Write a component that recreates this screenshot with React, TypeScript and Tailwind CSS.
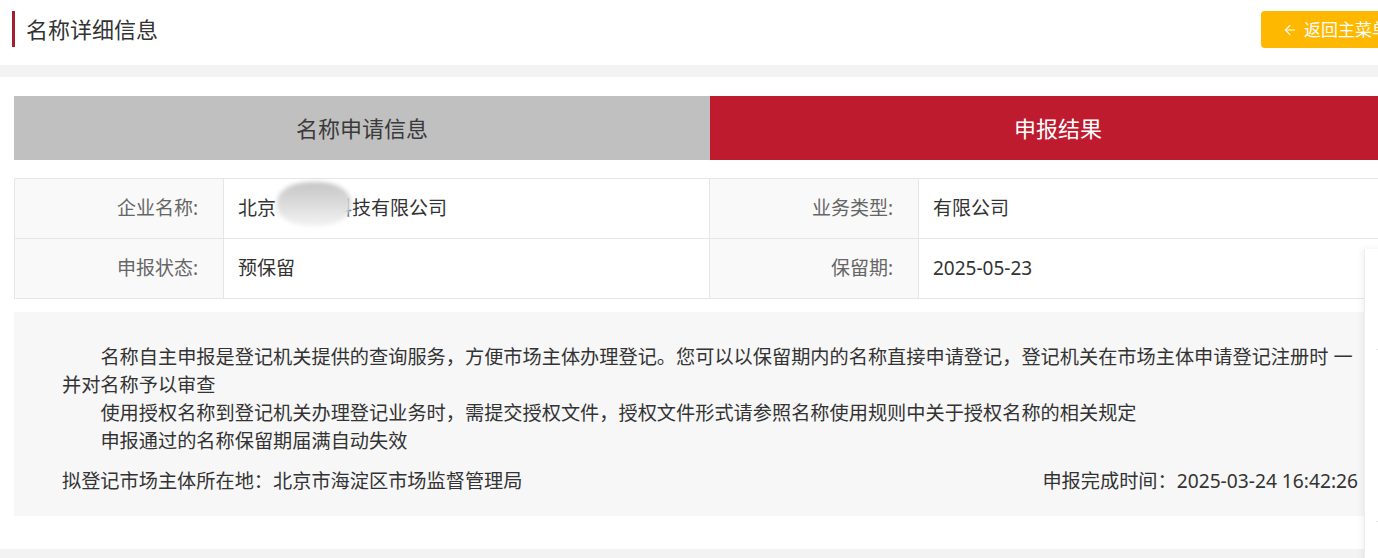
import { ArrowLeft } from "lucide-react";

type Field = {
  label: string;
  value: React.ReactNode;
};

const rows: Field[][] = [
  [
    {
      label: "企业名称:",
      value: (
        <span className="relative">
          北京<span className="text-transparent">某某某</span>科技有限公司
          <span className="absolute left-[39px] top-[-12px] h-[44px] w-[74px] rounded-[45%] bg-gradient-to-b from-[#c6c6c6] via-[#dcdcdc] to-[#f3f3f3] blur-[2px]" />
        </span>
      ),
    },
    { label: "业务类型:", value: "有限公司" },
  ],
  [
    { label: "申报状态:", value: "预保留" },
    { label: "保留期:", value: "2025-05-23" },
  ],
];

const notes = [
  "名称自主申报是登记机关提供的查询服务，方便市场主体办理登记。您可以以保留期内的名称直接申请登记，登记机关在市场主体申请登记注册时 一并对名称予以审查",
  "使用授权名称到登记机关办理登记业务时，需提交授权文件，授权文件形式请参照名称使用规则中关于授权名称的相关规定",
  "申报通过的名称保留期届满自动失效",
];

export default function App() {
  return (
    <div className="relative h-[558px] w-[1378px] overflow-hidden bg-white font-['Noto_Sans','Noto_Sans_CJK_SC',sans-serif] text-[#333]">
      <div className="w-[1420px]">
        {/* header */}
        <header className="flex h-[65px] items-start justify-between pl-3 pr-[10px] pt-[11px]">
          <div className="flex h-[36px] items-center border-l-[3px] border-[#a31f2f] pl-[11px] text-[22px] leading-none text-[#333]">
            名称详细信息
          </div>
          <button className="flex h-[37px] w-[149px] items-center gap-[6px] rounded-[4px] bg-[#ffb800] pl-[21px] text-[17px] leading-none text-white">
            <ArrowLeft className="h-[16px] w-[16px]" strokeWidth={1.6} />
            返回主菜单
          </button>
        </header>
        <div className="h-3 bg-[#f3f3f3]" />

        <main className="px-[14px] pt-[19px]">
          {/* tabs */}
          <div className="grid h-16 grid-cols-2 text-[22px]">
            <div className="flex items-center justify-center bg-[#c0c0c0] text-[#3a3a3a]">名称申请信息</div>
            <div className="flex items-center justify-center bg-[#bf1b2f] text-white">申报结果</div>
          </div>

          {/* details table */}
          <div className="mt-[18px] border-t border-l border-[#e6e6e6] text-[19px]">
            {rows.map((row, i) => (
              <div key={i} className="grid h-[60px] grid-cols-[209px_486px_209px_1fr] border-b border-[#e6e6e6]">
                {row.map((f) => (
                  <div key={f.label} className="contents">
                    <div className="flex items-center justify-end border-r border-[#e6e6e6] bg-[#f9f9f9] pr-[25px] text-[#666]">
                      {f.label}
                    </div>
                    <div className="flex items-center border-r border-[#e6e6e6] pl-[14px] text-[#333]">{f.value}</div>
                  </div>
                ))}
              </div>
            ))}
          </div>

          {/* notes */}
          <div className="mt-[13px] bg-[#f7f7f7] pb-[21px] pl-12 pr-12 pt-[31px] text-[19.2px] leading-[28px] text-[#333]">
            {notes.map((n) => (
              <p key={n} className="indent-[2em]">
                {n}
              </p>
            ))}
            <div className="mt-3 flex justify-between">
              <span>拟登记市场主体所在地：北京市海淀区市场监督管理局</span>
              <span>申报完成时间：2025-03-24 16:42:26</span>
            </div>
          </div>
        </main>

        <div className="mt-[33px] h-[10px] bg-[#f3f3f3]" />
      </div>

      {/* floating side panel, cut off by the window edge */}
      <div className="absolute left-[1364px] top-[249px] h-[320px] w-[60px] border-l border-[#eeeeee] bg-white shadow-[-2px_0_6px_rgba(0,0,0,0.06)]">
        <div className="ml-[11px] h-[101px] border-b border-[#e8e8e8]" />
        <div className="ml-[11px] h-[172px] border-b border-[#e8e8e8]" />
      </div>
    </div>
  );
}
